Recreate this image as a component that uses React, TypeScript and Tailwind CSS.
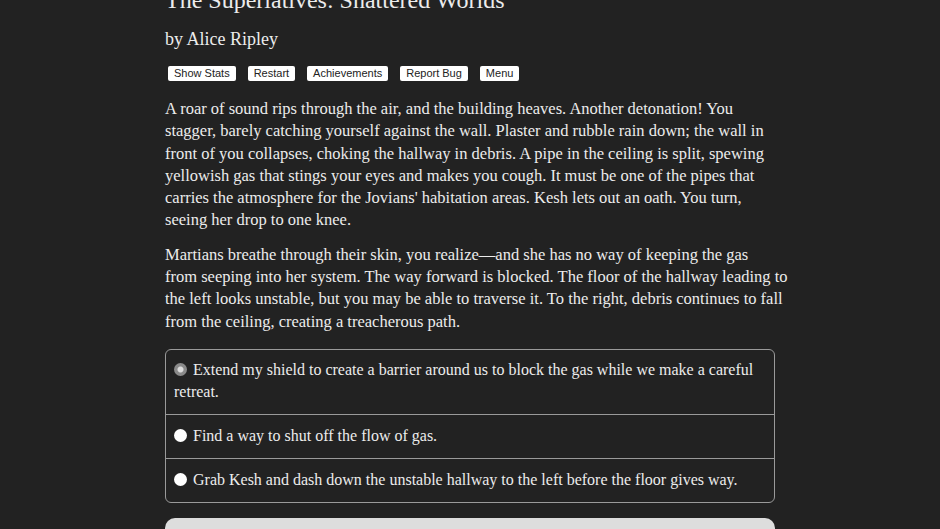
import React from 'react'

const serif = { fontFamily: '"Liberation Serif", "Times New Roman", serif' }
const sans = { fontFamily: '"Liberation Sans", Arial, sans-serif' }

const buttons = ['Show Stats', 'Restart', 'Achievements', 'Report Bug', 'Menu']

const para1 = [
    'A roar of sound rips through the air, and the building heaves. Another detonation! You',
    'stagger, barely catching yourself against the wall. Plaster and rubble rain down; the wall in',
    'front of you collapses, choking the hallway in debris. A pipe in the ceiling is split, spewing',
    'yellowish gas that stings your eyes and makes you cough. It must be one of the pipes that',
    "carries the atmosphere for the Jovians' habitation areas. Kesh lets out an oath. You turn,",
    'seeing her drop to one knee.',
]

const para2 = [
    'Martians breathe through their skin, you realize\u2014and she has no way of keeping the gas',
    'from seeping into her system. The way forward is blocked. The floor of the hallway leading to',
    'the left looks unstable, but you may be able to traverse it. To the right, debris continues to fall',
    'from the ceiling, creating a treacherous path.',
]

function Lines({ lines }: { lines: string[] }) {
    return (
        <p className="whitespace-nowrap text-[16.5px] leading-[22.3px] text-[#ececec]" style={serif}>
            {lines.map((l, i) => (
                <span key={i} className="block">{l}</span>
            ))}
        </p>
    )
}

function Radio({ checked }: { checked?: boolean }) {
    if (checked) {
        return (
            <span className="inline-block h-[13px] w-[13px] rounded-full bg-[radial-gradient(circle,#dcdcdc_0,#dcdcdc_2.5px,#8a8a8a_3.5px)] align-[-1px]" />
        )
    }
    return <span className="inline-block h-[13px] w-[13px] rounded-full bg-white align-[-1px]" />
}

export default function App() {
    return (
        <div className="h-screen w-full overflow-hidden bg-[#222222] text-[#ececec]">
            <div className="mx-auto w-[610px]">
                <h1 className="-mt-[14px] whitespace-nowrap text-[24px] leading-[28px]" style={serif}>
                    The Superlatives: Shattered Worlds
                </h1>
                <h2 className="mt-[13px] text-[18px] leading-[24px]" style={serif}>by Alice Ripley</h2>

                <div className="mt-[15px] ml-[3px] flex gap-[12px]">
                    {buttons.map(b => (
                        <button
                            key={b}
                            className="h-[15px] rounded-[2px] bg-white px-[6px] text-[11px] leading-[15px] text-[#222]"
                            style={sans}
                        >
                            {b}
                        </button>
                    ))}
                </div>

                <div className="mt-[17px]">
                    <Lines lines={para1} />
                </div>
                <div className="mt-[12px]">
                    <Lines lines={para2} />
                </div>

                <div className="mt-[16px] whitespace-nowrap rounded-[6px] border border-[#9a9a9a] text-[16px] leading-[22px]" style={serif}>
                    <div className="h-[65px] border-b border-[#9a9a9a] px-[8px] pt-[9px]">
                        <Radio checked /> <span className="ml-[2px]">Extend my shield to create a barrier around us to block the gas while we make a careful</span>
                        <br />retreat.
                    </div>
                    <div className="h-[44px] border-b border-[#9a9a9a] px-[8px] pt-[10px]">
                        <Radio /> <span className="ml-[2px]">Find a way to shut off the flow of gas.</span>
                    </div>
                    <div className="h-[43px] px-[8px] pt-[10px]">
                        <Radio /> <span className="ml-[2px]">Grab Kesh and dash down the unstable hallway to the left before the floor gives way.</span>
                    </div>
                </div>

                <div className="mt-[15px] h-[40px] rounded-[10px] bg-[#dddddd]" />
            </div>
        </div>
    )
}
